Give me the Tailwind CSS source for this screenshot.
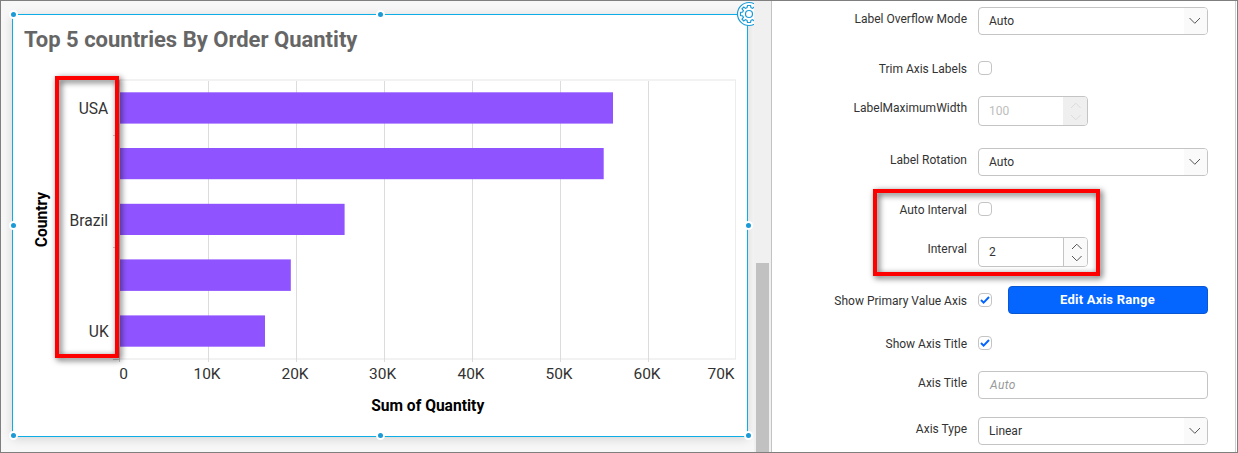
<!DOCTYPE html>
<html lang="en">
<head>
    <meta charset="UTF-8">
    <meta name="viewport" content="width=device-width, initial-scale=1.0">
    <title>Chart Axis Settings</title>
    <script src="https://cdn.jsdelivr.net/npm/@tailwindcss/browser@4"></script>
</head>
<body class="w-[1238px] h-[453px] overflow-hidden font-['Roboto',sans-serif]">
<div class="relative flex w-full h-full border border-[#7f7f7f] bg-white overflow-hidden">

    <!-- Canvas -->
    <div class="relative w-[753px] shrink-0 bg-[#f7f7f7] overflow-hidden pt-[13px] pl-[11px]">
        <div class="w-[736px] h-[423px] bg-white border border-[#0fade6] shadow-[0_2px_10px_rgba(0,0,0,0.14)]">
            <h1 class="pt-[10px] pl-[11px] text-[22px] leading-[30px] font-bold text-[#666] whitespace-nowrap">Top 5 countries By Order Quantity</h1>
            <svg class="block" width="734" height="376" viewBox="13 55 734 376" font-family="Roboto, sans-serif">
                <!-- Plot frame -->
                <path d="M119 80H736M119 359H736" stroke="#f2f2f2" stroke-width="2"/>
                <path d="M735.5 80V359" stroke="#ececec"/>
                <path d="M208.5 81V362M296.5 81V362M384.5 81V362M472.5 81V362M560.5 81V362M648.5 81V362" stroke="#dcdcdc"/>
                <path d="M119.5 80V362M113 135.5H119M113 247.5H119M113 359.5H119" stroke="#c9c9c9"/>
                <g fill="#8f54ff">
                    <rect x="120" y="92.3" width="493" height="31.3"/>
                    <rect x="120" y="148" width="483.7" height="31.2"/>
                    <rect x="120" y="203.8" width="224.6" height="31.2"/>
                    <rect x="120" y="259.4" width="170.8" height="31.5"/>
                    <rect x="120" y="315.4" width="145" height="31.3"/>
                </g>
                <g fill="#333" font-size="15.6" text-anchor="end">
                    <text x="108.300" y="114">USA</text>
                    <text x="108" y="226">Brazil</text>
                    <text x="108.700" y="337">UK</text>
                </g>
                <g fill="#333" font-size="15.5" text-anchor="middle">
                    <text x="123.500" y="379">0</text>
                    <text x="207" y="379">10K</text>
                    <text x="295" y="379">20K</text>
                    <text x="382.700" y="379">30K</text>
                    <text x="471" y="379">40K</text>
                    <text x="559" y="379">50K</text>
                    <text x="647" y="379">60K</text>
                    <text x="721" y="379">70K</text>
                </g>
                <g fill="#000" font-size="15.6" font-weight="700" text-anchor="middle">
                    <text x="427.700" y="411">Sum of Quantity</text>
                    <text transform="translate(47 219.500) rotate(-90)">Country</text>
                </g>
            </svg>
        </div>

        <!-- Resize handles and settings gear -->
        <svg class="absolute left-0 top-0" width="753" height="451" viewBox="1 1 753 451">
            <g fill="#1b9ad6" stroke="#fff" stroke-width="2">
                <circle cx="13.500" cy="14.500" r="3.500"/>
                <circle cx="380.500" cy="14.500" r="3.500"/>
                <circle cx="13.500" cy="225.500" r="3.500"/>
                <circle cx="748.500" cy="225.500" r="3.500"/>
                <circle cx="13.500" cy="435.500" r="3.500"/>
                <circle cx="380.500" cy="435.500" r="3.500"/>
                <circle cx="748.500" cy="435.500" r="3.500"/>
            </g>
            <g transform="translate(749 14)" fill="none" stroke="#1b9ad6" stroke-width="1.200">
                <circle r="11.500" fill="#fff"/>
                <path d="M-1.500 -8.500H1.500L2 -6.300L3.500 -5.600L5.200 -7L7 -5.200L5.600 -3.500L6.300 -2L8.500 -1.500V1.500L6.300 2L5.600 3.500L7 5.200L5.200 7L3.500 5.600L2 6.300L1.500 8.500H-1.500L-2 6.300L-3.500 5.600L-5.200 7L-7 5.200L-5.600 3.500L-6.300 2L-8.500 1.500V-1.500L-6.300 -2L-5.600 -3.500L-7 -5.200L-5.200 -7L-3.500 -5.600L-2 -6.300Z"/>
                <circle r="3.500"/>
            </g>
        </svg>
    </div>

    <!-- Scrollbar -->
    <div class="w-[18px] shrink-0 bg-[#f0f0f0] border-r border-[#c3c3c3] pt-[262px] pl-[2px]">
        <div class="w-[13px] h-[200px] bg-[#c1c1c1]"></div>
    </div>

    <!-- Axis settings -->
    <div class="w-[464px] shrink-0 border-r border-[#cfcfcf] pt-[6px] text-[12px] leading-4 text-[#333]">
        <div class="flex h-7">
            <label class="w-[195px] mr-[11px] pt-[4px] text-right">Label Overflow Mode</label>
            <div class="flex w-[230px] h-7 border border-[#c4c4c4] rounded-[4px] overflow-hidden">
                <span class="flex-1 pl-[10px] pt-[5px]">Auto</span>
                <span class="w-[23px] bg-[#fafafa] pt-[9px] pl-[5px]"><svg width="12" height="8" fill="none" stroke="#555"><path d="M0.500 1L5.800 6.300L11 1"/></svg></span>
            </div>
        </div>
        <div class="flex h-[14px] mt-[26px]">
            <label class="w-[195px] mr-[11px] text-right">Trim Axis Labels</label>
            <span class="size-[14px] border border-[#c4c4c4] rounded-[4px]"></span>
        </div>
        <div class="flex h-[30px] mt-[21px]">
            <label class="w-[195px] mr-[11px] pt-[4px] text-right">LabelMaximumWidth</label>
            <div class="flex w-[110px] h-[30px] border border-[#c4c4c4] rounded-[4px] overflow-hidden">
                <span class="flex-1 pl-[10px] pt-[6px] text-[#bdbdbd]">100</span>
                <span class="w-6 bg-[#efefef] pt-[5px] pl-[7px]"><svg width="12" height="20" fill="none" stroke="#dcdcdc"><path d="M1 6L5.800 1.200L10.600 6M1 13L5.800 17.800L10.600 13"/></svg></span>
            </div>
        </div>
        <div class="flex h-7 mt-[22px]">
            <label class="w-[195px] mr-[11px] pt-[4px] text-right">Label Rotation</label>
            <div class="flex w-[230px] h-7 border border-[#c4c4c4] rounded-[4px] overflow-hidden">
                <span class="flex-1 pl-[10px] pt-[5px]">Auto</span>
                <span class="w-[23px] bg-[#fafafa] pt-[9px] pl-[5px]"><svg width="12" height="8" fill="none" stroke="#555"><path d="M0.500 1L5.800 6.300L11 1"/></svg></span>
            </div>
        </div>
        <div class="flex h-[14px] mt-[26px]">
            <label class="w-[195px] mr-[11px] text-right">Auto Interval</label>
            <span class="size-[14px] border border-[#c4c4c4] rounded-[4px]"></span>
        </div>
        <div class="flex h-[30px] mt-[21px]">
            <label class="w-[195px] mr-[11px] pt-[4px] text-right">Interval</label>
            <div class="flex w-[110px] h-[30px] border border-[#c4c4c4] rounded-[4px] overflow-hidden">
                <span class="flex-1 pl-[10px] pt-[6px]">2</span>
                <span class="w-6 border-l border-[#c4c4c4] bg-[#fafafa] pt-[5px] pl-[7px]"><svg width="12" height="20" fill="none" stroke="#555"><path d="M1 6L5.800 1.200L10.600 6M1 13L5.800 17.800L10.600 13"/></svg></span>
            </div>
        </div>
        <div class="flex h-7 mt-[19px]">
            <label class="w-[195px] mr-[11px] pt-[7px] text-right">Show Primary Value Axis</label>
            <span class="size-[14px] mt-[7px] border border-[#c4c4c4] rounded-[4px]"><svg class="block" width="12" height="12" fill="none" stroke="#0565ff" stroke-width="2"><path d="M2 6L4.600 8.600L10 3"/></svg></span>
            <button class="w-[200px] h-7 ml-4 pr-px rounded-[4px] border border-[#0a57d4] bg-[#0565ff] text-white font-bold text-[13px] leading-4 tracking-[0.25px]">Edit Axis Range</button>
        </div>
        <div class="flex h-[14px] mt-[22px]">
            <label class="w-[195px] mr-[11px] text-right">Show Axis Title</label>
            <span class="size-[14px] border border-[#c4c4c4] rounded-[4px]"><svg class="block" width="12" height="12" fill="none" stroke="#0565ff" stroke-width="2"><path d="M2 6L4.600 8.600L10 3"/></svg></span>
        </div>
        <div class="flex h-7 mt-[21px]">
            <label class="w-[195px] mr-[11px] pt-[4px] text-right">Axis Title</label>
            <div class="w-[230px] h-7 border border-[#c4c4c4] rounded-[4px] pl-[11px] pt-[5px] italic text-[#999] tracking-[0.4px]">Auto</div>
        </div>
        <div class="flex h-7 mt-[18px]">
            <label class="w-[195px] mr-[11px] pt-[4px] text-right">Axis Type</label>
            <div class="flex w-[230px] h-7 border border-[#c4c4c4] rounded-[4px] overflow-hidden">
                <span class="flex-1 pl-[10px] pt-[5px]">Linear</span>
                <span class="w-[23px] bg-[#fafafa] pt-[9px] pl-[5px]"><svg width="12" height="8" fill="none" stroke="#555"><path d="M0.500 1L5.800 6.300L11 1"/></svg></span>
            </div>
        </div>
    </div>

    <!-- Callout frames -->
    <div class="absolute left-[54px] top-[75px] w-[64px] h-[282px] border-4 border-[#f00] drop-shadow-[2px_2px_3px_rgba(0,0,0,0.68)]"></div>
    <div class="absolute left-[872px] top-[188px] w-[227px] h-[87px] border-4 border-[#f00] drop-shadow-[2px_2px_3px_rgba(0,0,0,0.68)]"></div>
</div>
</body>
</html>
